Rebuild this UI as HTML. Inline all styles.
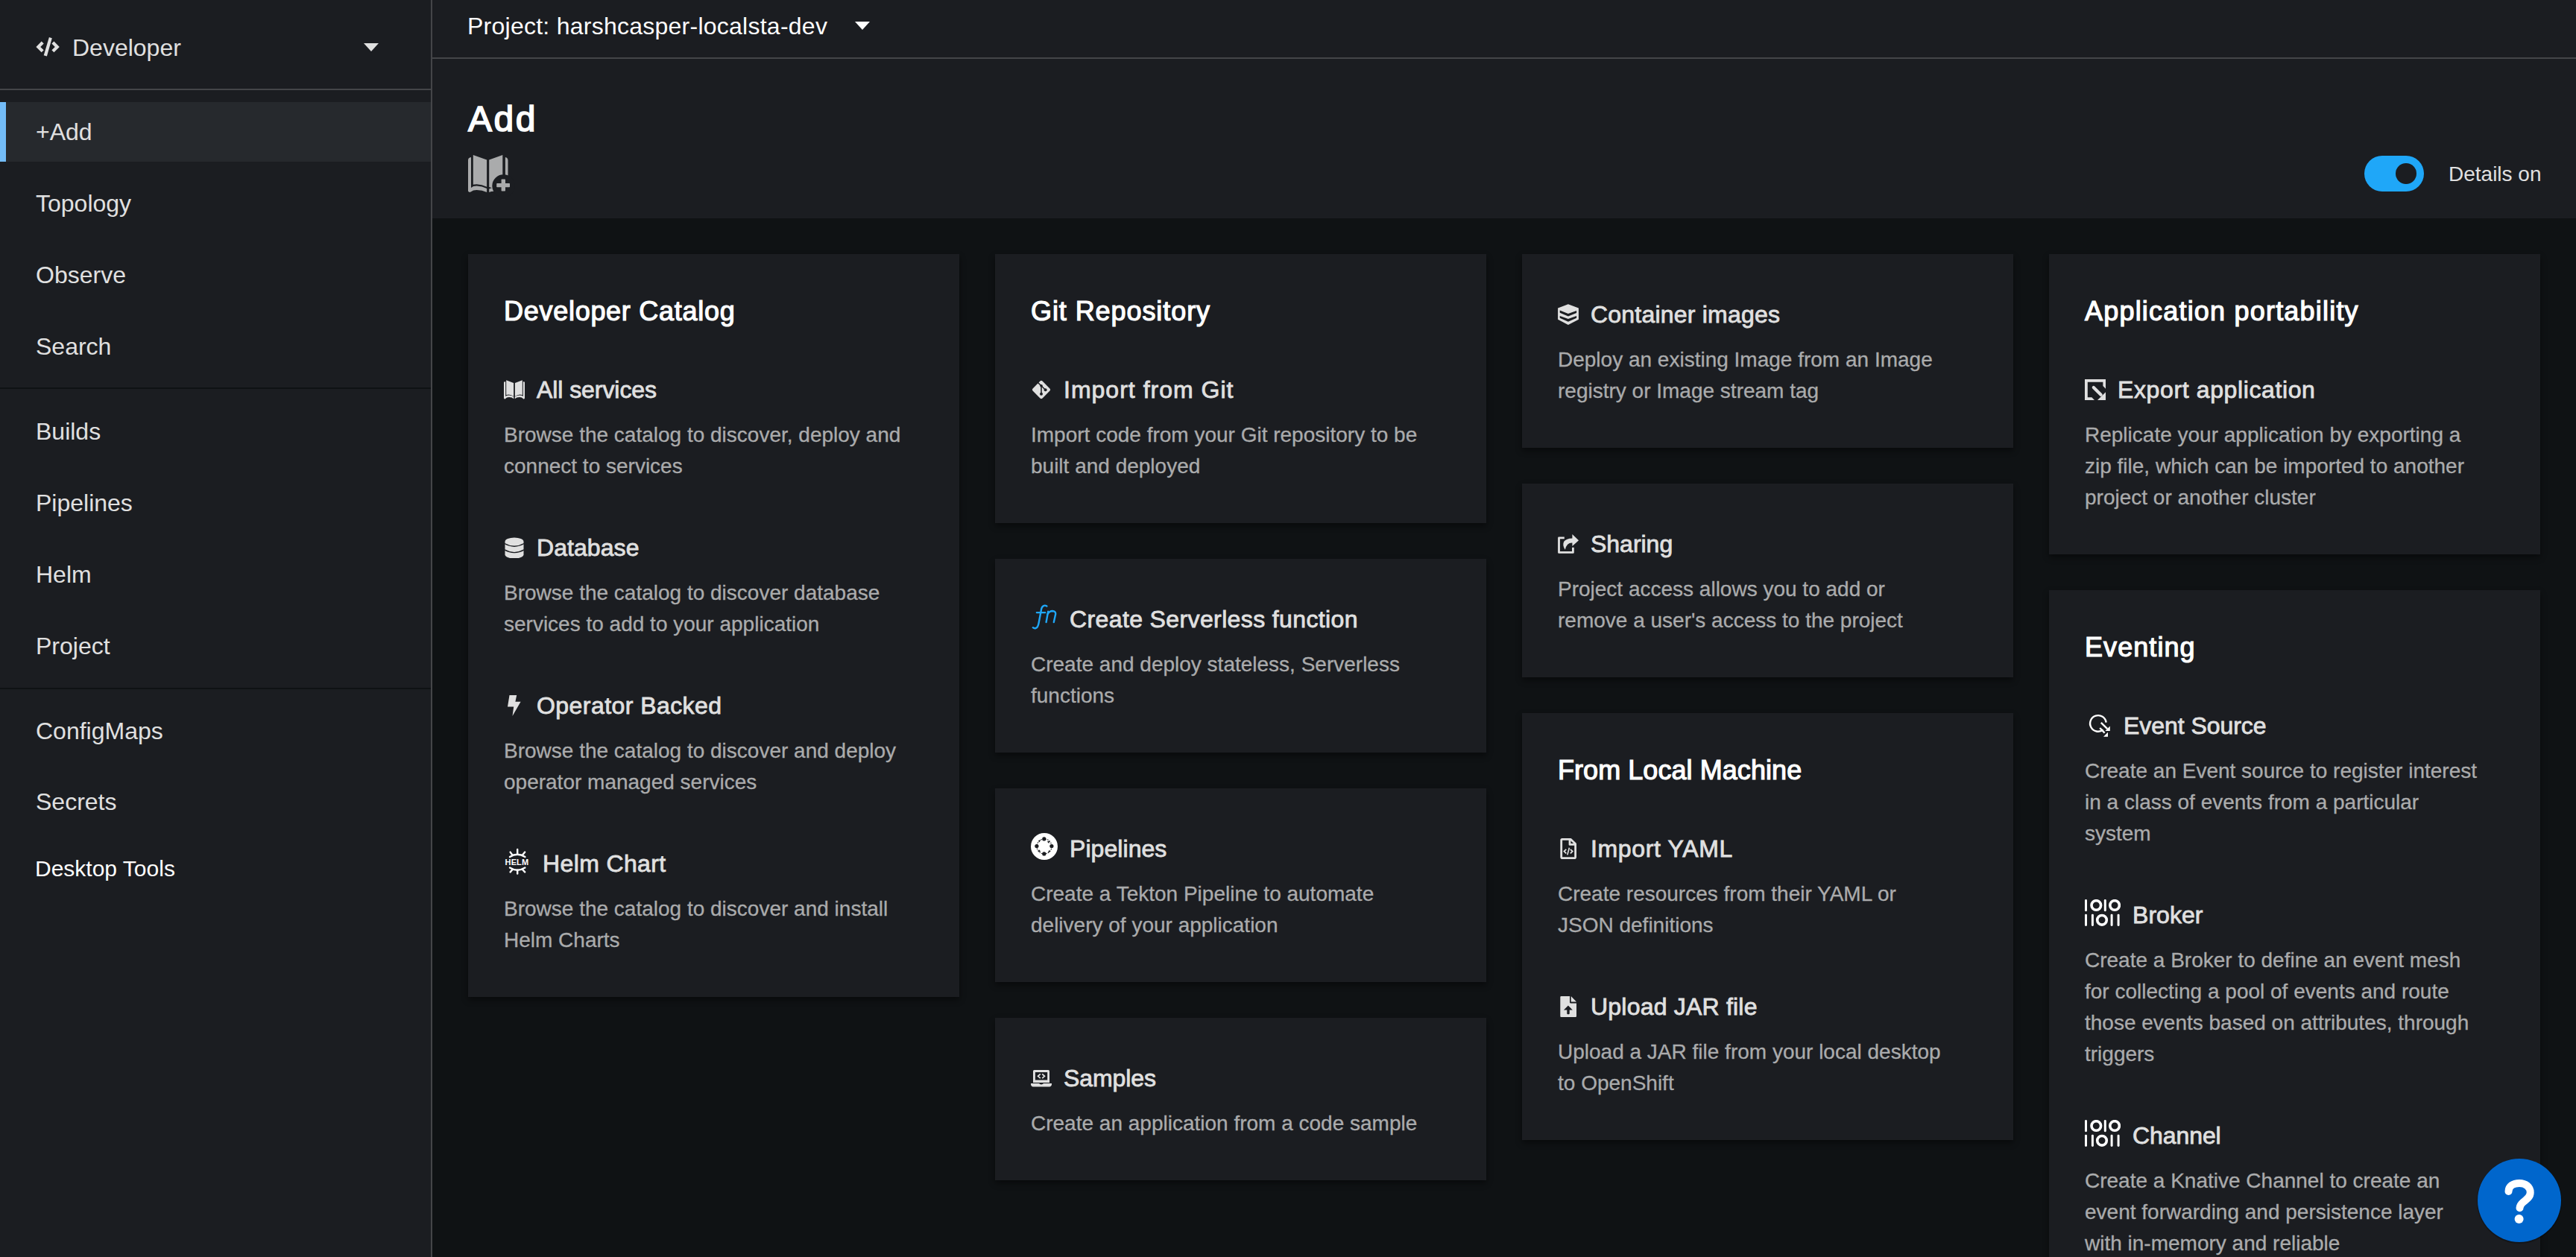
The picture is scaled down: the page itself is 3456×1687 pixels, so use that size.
<!DOCTYPE html>
<html><head><meta charset="utf-8">
<style>
*{box-sizing:border-box;margin:0;padding:0}
html,body{width:3456px;height:1687px;overflow:hidden;background:#0f1214;font-family:"Liberation Sans",sans-serif;}
.abs{position:absolute}
#side{position:absolute;left:0;top:0;width:578px;height:1687px;background:#1b1d21}
#sideborder{position:absolute;left:578px;top:0;width:2px;height:1687px;background:#444548}
.nav{position:absolute;left:48px;font-size:32px;line-height:48px;color:#e0e0e0;white-space:nowrap}
#topbar{position:absolute;left:580px;top:0;width:2876px;height:77px;background:#1b1d21;border-bottom:0}
#topline{position:absolute;left:580px;top:77px;width:2876px;height:2px;background:#444548}
#pagehead{position:absolute;left:580px;top:79px;width:2876px;height:214px;background:#1b1d21}
#content{position:absolute;left:580px;top:293px;width:2876px;height:1394px;background:#0f1214}
.col{position:absolute;top:341px;width:659px}
.card{background:#1b1d21;padding:48px 48px 55px;margin-bottom:48px;box-shadow:0 4px 8px rgba(0,0,0,.45)}
.ctitle{position:relative;top:2px;font-size:36px;line-height:54px;color:#fff;-webkit-text-stroke:1.2px #fff;margin-bottom:47px;white-space:nowrap}
.item{padding-top:9px;margin-bottom:55px}
.item:last-child{margin-bottom:0}
.ititle{font-size:32px;line-height:48px;color:#e0e0e0;white-space:nowrap;display:flex;align-items:center;-webkit-text-stroke:0.8px #e0e0e0}
.ititle svg{flex:none;margin-right:16px}
.desc{white-space:nowrap;margin-top:16px;font-size:28px;line-height:42px;color:#aaabac;-webkit-text-stroke:0.3px #aaabac}
</style></head><body>
<div id="side">
  <svg class="abs" style="left:0;top:0" width="100" height="100" viewBox="0 0 100 100"><g fill="#e0e0e0"><path d="M48.4 62.9 L55.7 55.6 L58.7 58.6 L54.2 62.9 L58.7 67.3 L55.7 70.3 Z"/><path d="M79.8 62.9 L72.4 55.6 L69.4 58.6 L73.8 62.9 L69.4 67.3 L72.4 70.3 Z"/><path d="M65.9 50.1 L69.8 51.3 L62.9 75.6 L58.7 74.3 Z"/></g></svg>
  <div class="nav" style="left:97px;top:40px">Developer</div>
  <svg class="abs" style="left:488px;top:58px" width="20" height="12" viewBox="0 0 20 12"><path d="M0 0 H20 L10 11 Z" fill="#e0e0e0"/></svg>
  <div class="abs" style="left:0;top:119px;width:578px;height:2px;background:#444548"></div>
  <div class="abs" style="left:0;top:137px;width:578px;height:80px;background:#26292d"></div>
  <div class="abs" style="left:0;top:137px;width:8px;height:80px;background:#73bcf7"></div>
  <div class="nav" style="top:153px">+Add</div>
  <div class="nav" style="top:249px">Topology</div>
  <div class="nav" style="top:345px">Observe</div>
  <div class="nav" style="top:441px">Search</div>
  <div class="abs" style="left:0;top:520px;width:578px;height:2px;background:#0f1214"></div>
  <div class="nav" style="top:555px">Builds</div>
  <div class="nav" style="top:651px">Pipelines</div>
  <div class="nav" style="top:747px">Helm</div>
  <div class="nav" style="top:843px">Project</div>
  <div class="abs" style="left:0;top:923px;width:578px;height:2px;background:#0f1214"></div>
  <div class="nav" style="top:957px">ConfigMaps</div>
  <div class="nav" style="top:1052px">Secrets</div>
  <div class="nav" style="left:47px;top:1143px;font-size:30px;line-height:45px;color:#fff">Desktop Tools</div>
</div>
<div id="sideborder"></div>
<div id="topbar"></div>
<div id="topline"></div>
<div class="nav" style="left:627px;top:11px;color:#fff;letter-spacing:0.25px">Project: harshcasper-localsta-dev</div>
<svg class="abs" style="left:1147px;top:29px" width="20" height="12" viewBox="0 0 20 12"><path d="M0 0 H20 L10 11 Z" fill="#fff"/></svg>
<div id="pagehead"></div>
<div class="abs" style="left:628px;top:124px;font-size:48px;line-height:72px;color:#fff;-webkit-text-stroke:1.6px #fff;letter-spacing:2.5px">Add</div>
<svg class="abs" style="left:620px;top:195px" width="80" height="70" viewBox="0 0 80 70"><g fill="#aaabac">
<path d="M8 20 Q8 16.6 12 16.1 V57 Q14.5 54.6 19.5 54.6 Q27 54.8 33.1 57.9 V62.9 Q27 60 19.5 60 Q14.5 60 12 62.2 Q9.5 64 8 61.5 Z"/>
<path d="M14.8 12.9 L33.1 19.5 V55.7 Q26.5 52.2 19.5 52.2 Q16.5 52.2 14.8 52.8 Z"/>
<path d="M36.2 19.5 L54.3 12.9 V52 Q48 54 42 57.8 L36.2 56 Z"/>
<path d="M57.9 16.1 Q61.5 17 61.5 20.5 V45 H57.9 Z"/>
<path d="M36.2 58.5 Q42 55.5 48 55 L50 62.9 Q42 60.5 36.2 62.9 Z"/>
</g><circle cx="55.5" cy="54.5" r="15.2" fill="#1b1d21"/><g fill="#aaabac"><rect x="52.6" y="45.4" width="5.4" height="16.1" rx="0.8"/><rect x="46.2" y="51" width="17.8" height="5.2" rx="0.8"/></g></svg>
<div class="abs" style="left:3172px;top:209px;width:80px;height:48px;border-radius:24px;background:#1fa7f8"></div>
<div class="abs" style="left:3214px;top:219px;width:28px;height:28px;border-radius:14px;background:#1b1d21"></div>
<div class="abs" style="left:3285px;top:213px;font-size:28px;line-height:42px;color:#e0e0e0">Details on</div>
<div id="content"></div>
<!--COLS--><div class="col" style="left:628px"><div class="card"><div class="ctitle" style="letter-spacing:0.72px">Developer Catalog</div><div class="item"><div class="ititle"><span style="display:contents"><svg width="28" height="28" viewBox="0 -1 28 28"><g fill="#e0e0e0">
<path d="M0 3.2 Q0 2.3 1.2 2.2 L2.2 2.3 V22 Q3.5 20.6 7 20.6 Q11 20.7 13.2 22.6 V25.2 Q11 23.2 7 23.1 Q3.6 23.1 2.2 25 Q1 26.2 0 24.6 Z"/>
<path d="M28 3.2 Q28 2.3 26.8 2.2 L25.8 2.3 V22 Q24.5 20.6 21 20.6 Q17 20.7 14.8 22.6 V25.2 Q17 23.2 21 23.1 Q24.4 23.1 25.8 25 Q27 26.2 28 24.6 Z"/>
<path d="M3.2 0.3 L13.1 3.9 V22 Q10 19.8 6.5 19.6 Q4.5 19.6 3.2 20 Z"/>
<path d="M24.8 0.3 L14.9 3.9 V22 Q18 19.8 21.5 19.6 Q23.5 19.6 24.8 20 Z"/>
</g></svg></span><span style="letter-spacing:-0.07px">All services</span></div><div class="desc">Browse the catalog to discover, deploy and<br>connect to services</div></div><div class="item"><div class="ititle"><span style="display:contents"><svg width="28" height="28" viewBox="-1.5 -0.3 28 28"><path fill="#e0e0e0" d="M0 5.6 A12.5 5.4 0 0 1 25 5.6 V23 A12.5 5.3 0 0 1 0 23 Z"/>
<g fill="none" stroke="#1b1d21" stroke-width="1.4"><path d="M-0.5 8.2 Q12.5 15.6 25.5 8.2"/><path d="M-0.5 16.6 Q12.5 24 25.5 16.6"/></g></svg></span><span style="letter-spacing:0.07px">Database</span></div><div class="desc">Browse the catalog to discover database<br>services to add to your application</div></div><div class="item"><div class="ititle"><span style="display:contents"><svg width="28" height="28" viewBox="-5 0 28 28"><path fill="#e0e0e0" d="M2.5 0.1 H12.2 L10.4 8.8 H17.6 L6.5 28 L8.2 15.6 H0 Z"/></svg></span><span style="letter-spacing:0.44px">Operator Backed</span></div><div class="desc">Browse the catalog to discover and deploy<br>operator managed services</div></div><div class="item"><div class="ititle"><span style="display:contents"><svg width="36" height="36" viewBox="0 0 36 36" style="position:relative;top:-3px"><g stroke="#fff" stroke-width="2.4" fill="none" stroke-linecap="round">
<path d="M8 12 Q18 5.5 28.4 12"/><path d="M18.2 8.8 V2"/><path d="M11.5 9.6 L8.6 5.6"/><path d="M25 9.6 L28.2 5.6"/>
<path d="M8 26.6 Q18 33 28.4 26.6"/><path d="M18.2 29.8 V34.6"/><path d="M11.5 29 L8.6 32.4"/><path d="M25 29 L28.2 32.4"/></g>
<text x="1.6" y="23.1" font-family="Liberation Sans" font-weight="bold" font-size="11" fill="#fff" letter-spacing="0.1">HELM</text></svg></span><span style="letter-spacing:0.37px">Helm Chart</span></div><div class="desc">Browse the catalog to discover and install<br>Helm Charts</div></div></div></div>
<div class="col" style="left:1335px"><div class="card"><div class="ctitle" style="letter-spacing:0.92px">Git Repository</div><div class="item"><div class="ititle"><span style="display:contents"><svg width="28" height="28" viewBox="0 0 28 28"><rect x="4.8" y="4.8" width="18.4" height="18.4" rx="2.2" transform="rotate(45 14 14)" fill="#e0e0e0"/>
<g stroke="#1b1d21" stroke-width="1.5" fill="none"><path d="M9.6 4.6 L14 8.8 L19.5 14.2"/><path d="M14 8.8 V19.6"/></g><g fill="#1b1d21"><circle cx="14" cy="8.8" r="1.8"/><circle cx="14" cy="19.8" r="2"/><circle cx="19.6" cy="14.3" r="2"/></g></svg></span><span style="letter-spacing:1.01px">Import from Git</span></div><div class="desc">Import code from your Git repository to be<br>built and deployed</div></div></div><div class="card"><div class="item"><div class="ititle"><span style="display:contents"><svg width="36" height="36" viewBox="0 0 36 36" style="position:relative;top:-3px"><g stroke="#1fa7f8" stroke-width="2.4" fill="none" stroke-linecap="round">
<path d="M21.4 3.5 Q19.5 2.2 17.6 2.8 Q15 3.6 14.2 7 L10.6 26 Q9.6 32 6.6 33 Q4.4 33.6 2.8 32.2"/><path d="M7.9 12.1 H19.2"/>
<path d="M23.2 10.6 L20.6 25"/><path d="M22.6 14 Q25 10 29 10 Q33.5 10.3 33.2 14 L30.8 25"/></g></svg></span><span style="letter-spacing:0.38px">Create Serverless function</span></div><div class="desc">Create and deploy stateless, Serverless<br>functions</div></div></div><div class="card"><div class="item"><div class="ititle"><span style="display:contents"><svg width="36" height="36" viewBox="0 0 36 36" style="position:relative;top:-3px"><circle cx="18" cy="18" r="18" fill="#fff"/>
<circle cx="18" cy="18" r="10" fill="none" stroke="#1b1d21" stroke-width="1.1" stroke-dasharray="1.6 1.4"/>
<g fill="#1b1d21"><circle cx="17.8" cy="7.9" r="2.6"/><circle cx="7.9" cy="17.6" r="2.6"/><circle cx="27.9" cy="17.6" r="2.6"/><circle cx="17.8" cy="27.9" r="2.6"/>
<path d="M9.8 10.6 L13.2 9 L11.5 12.6 Z"/><path d="M25.2 10.6 L24.3 14 L21.8 11.4 Z"/><path d="M9.8 25.4 L10.8 22 L13.2 24.8 Z"/><path d="M26.4 25 L22.8 26.6 L24.4 23 Z"/></g></svg></span><span style="letter-spacing:0.06px">Pipelines</span></div><div class="desc">Create a Tekton Pipeline to automate<br>delivery of your application</div></div></div><div class="card"><div class="item"><div class="ititle"><span style="display:contents"><svg width="28" height="28" viewBox="0 0 28 28"><path fill="#e0e0e0" fill-rule="evenodd" d="M4.6 3 H23.4 Q25 3 25 4.6 V20 H3 V4.6 Q3 3 4.6 3 Z M5.9 5.9 V16.6 H22.2 V5.9 Z"/>
<path fill="#e0e0e0" d="M0 21 H11 Q12 22.4 14 22.4 Q16 22.4 17 21 H28 V22.6 Q27.6 25.4 25 25.4 H3 Q0.4 25.4 0 22.6 Z"/>
<g stroke="#e0e0e0" stroke-width="1.8" fill="none"><path d="M12.8 8.4 L9.6 11.3 L12.8 14.2"/><path d="M15.2 8.4 L18.4 11.3 L15.2 14.2"/></g></svg></span><span style="letter-spacing:-0.08px">Samples</span></div><div class="desc">Create an application from a code sample</div></div></div></div>
<div class="col" style="left:2042px"><div class="card"><div class="item"><div class="ititle"><span style="display:contents"><svg width="28" height="28" viewBox="0 0 28 28"><path fill="#e0e0e0" d="M13.9 0.2 L27.9 5.5 V20.8 L13.9 28 L0.1 20.8 V5.5 Z"/>
<g fill="#1b1d21"><path d="M2.7 8.5 L13.9 12.9 L25.1 8.9 V11.9 L13.9 16.6 L2.7 11.7 Z"/><path d="M2.7 16 L13.9 20 L25.1 16 V18.8 L13.9 23.8 L2.7 18.8 Z"/></g></svg></span><span style="letter-spacing:0.21px">Container images</span></div><div class="desc">Deploy an existing Image from an Image<br>registry or Image stream tag</div></div></div><div class="card"><div class="item"><div class="ititle"><span style="display:contents"><svg width="28" height="28" viewBox="0 0 28 28"><path fill="none" stroke="#e0e0e0" stroke-width="2.8" stroke-linejoin="round" d="M8.8 5.9 H1.5 V25.4 H20.4 V18.8"/>
<path fill="#e0e0e0" d="M19.4 0.9 L28 9.3 L19.4 17 V12.6 Q12 12.2 9.8 21.8 Q5.6 15.4 8.4 10.6 Q11.2 6.6 19.4 6.4 Z"/></svg></span><span style="letter-spacing:-0.02px">Sharing</span></div><div class="desc">Project access allows you to add or<br>remove a user's access to the project</div></div></div><div class="card"><div class="ctitle" style="letter-spacing:0.06px">From Local Machine</div><div class="item"><div class="ititle"><span style="display:contents"><svg width="28" height="28" viewBox="0 0 28 28"><path fill="none" stroke="#e0e0e0" stroke-width="2.8" stroke-linejoin="round" d="M5.8 1.4 H17.4 L23.6 7.4 V25.2 Q23.6 26.6 22.2 26.6 H6.1 Q4.7 26.6 4.7 25.2 V2.8 Q4.7 1.4 5.8 1.4 Z M16 1.6 V8.4 H23.4"/>
<g fill="#e0e0e0"><path d="M7.1 17.6 L10.6 14.2 L11.9 15.5 L9.7 17.6 L11.9 19.7 L10.6 21 Z"/><path d="M21 17.6 L17.5 14.2 L16.2 15.5 L18.4 17.6 L16.2 19.7 L17.5 21 Z"/><path d="M14.6 12.5 L16.2 12.9 L13.6 22.6 L12 22.2 Z"/></g></svg></span><span style="letter-spacing:0.65px">Import YAML</span></div><div class="desc">Create resources from their YAML or<br>JSON definitions</div></div><div class="item"><div class="ititle"><span style="display:contents"><svg width="28" height="28" viewBox="0 0 28 28"><path fill="#e0e0e0" d="M4.5 0 H16 V8.3 Q16 9.4 17.1 9.4 H25 V26.8 Q25 28 23.8 28 H4.5 Q3.3 28 3.3 26.8 V1.2 Q3.3 0 4.5 0 Z M17.7 0 L25 7.4 H17.7 Z"/>
<path fill="#1b1d21" d="M13.9 12.5 L19.8 18.5 H15.7 V23.3 Q15.7 24.3 14.6 24.3 H13.4 Q12.3 24.3 12.3 23.3 V18.5 H7.9 Z"/></svg></span><span style="letter-spacing:0.21px">Upload JAR file</span></div><div class="desc">Upload a JAR file from your local desktop<br>to OpenShift</div></div></div></div>
<div class="col" style="left:2749px"><div class="card"><div class="ctitle" style="letter-spacing:1.2px">Application portability</div><div class="item"><div class="ititle"><span style="display:contents"><svg width="28" height="28" viewBox="0 0 28 28"><path fill="#e0e0e0" d="M0 0 H28.2 V12.9 L24.4 9.1 V3.7 H3.8 V24.3 H9.3 L13 28 H0 Z"/>
<path fill="none" stroke="#e0e0e0" stroke-width="4.2" stroke-linecap="round" d="M11.8 11 L21.6 20.8"/><path fill="#e0e0e0" d="M28.2 17 V28 H17 Z"/></svg></span><span style="letter-spacing:0.62px">Export application</span></div><div class="desc">Replicate your application by exporting a<br>zip file, which can be imported to another<br>project or another cluster</div></div></div><div class="card"><div class="ctitle" style="letter-spacing:1.07px">Eventing</div><div class="item"><div class="ititle"><span style="display:contents"><svg width="36" height="36" viewBox="0 0 36 36"><g fill="none" stroke="#fff" stroke-width="2.4"><path d="M24.6 23.4 A10.8 10.8 0 1 1 28.6 13.6"/>
<path d="M21.8 13.8 L30.2 22.2"/><path d="M20.2 21 L26.6 27.6"/></g><g fill="#fff"><path d="M33.8 18.6 V25 H27.4 Z"/><path d="M31 26.8 V32.8 H25 Z"/></g></svg></span><span style="letter-spacing:-0.05px">Event Source</span></div><div class="desc">Create an Event source to register interest<br>in a class of events from a particular<br>system</div></div><div class="item"><div class="ititle"><span style="display:contents"><svg width="48" height="36" viewBox="0 0 48 36" style="position:relative;top:-3px"><g fill="#fff"><rect x="0" y="0" width="3" height="16.2" rx="1.4"/><rect x="25.8" y="0" width="3" height="16.2" rx="1.4"/>
<rect x="0" y="19.7" width="3" height="16.3" rx="1.4"/><rect x="8.9" y="19.7" width="3" height="16.3" rx="1.4"/><rect x="34.6" y="19.7" width="3" height="16.3" rx="1.4"/><rect x="43.6" y="19.7" width="3" height="16.3" rx="1.4"/></g>
<g fill="none" stroke="#fff" stroke-width="3.6"><circle cx="15.3" cy="8" r="6.3"/><circle cx="40.1" cy="8" r="6.3"/><circle cx="23" cy="27.8" r="6.3"/></g></svg></span><span style="letter-spacing:0.04px">Broker</span></div><div class="desc">Create a Broker to define an event mesh<br>for collecting a pool of events and route<br>those events based on attributes, through<br>triggers</div></div><div class="item"><div class="ititle"><span style="display:contents"><svg width="48" height="36" viewBox="0 0 48 36" style="position:relative;top:-3px"><g fill="#fff"><rect x="0" y="0" width="3" height="16.2" rx="1.4"/><rect x="25.8" y="0" width="3" height="16.2" rx="1.4"/>
<rect x="0" y="19.7" width="3" height="16.3" rx="1.4"/><rect x="8.9" y="19.7" width="3" height="16.3" rx="1.4"/><rect x="34.6" y="19.7" width="3" height="16.3" rx="1.4"/><rect x="43.6" y="19.7" width="3" height="16.3" rx="1.4"/></g>
<g fill="none" stroke="#fff" stroke-width="3.6"><circle cx="15.3" cy="8" r="6.3"/><circle cx="40.1" cy="8" r="6.3"/><circle cx="23" cy="27.8" r="6.3"/></g></svg></span><span style="letter-spacing:-0.08px">Channel</span></div><div class="desc">Create a Knative Channel to create an<br>event forwarding and persistence layer<br>with in-memory and reliable<br>delivery</div></div></div></div>
<!--/COLS-->
<svg class="abs" style="left:3324px;top:1555px;overflow:visible" width="112" height="112" viewBox="0 0 112 112"><circle cx="56" cy="57" r="57" fill="rgba(0,0,0,0.25)"/><circle cx="56" cy="56" r="56" fill="#0066cc"/><path d="M41.5 44 C41.5 37 47.5 33 56 33 C64.5 33 70.7 38 70.7 45.5 C70.7 52 65 55 61 58.5 C58 61 56.5 63 56.5 66.3" fill="none" stroke="#fff" stroke-width="10" stroke-linecap="round"/><circle cx="55.6" cy="81" r="6" fill="#fff"/></svg>
</body></html>
